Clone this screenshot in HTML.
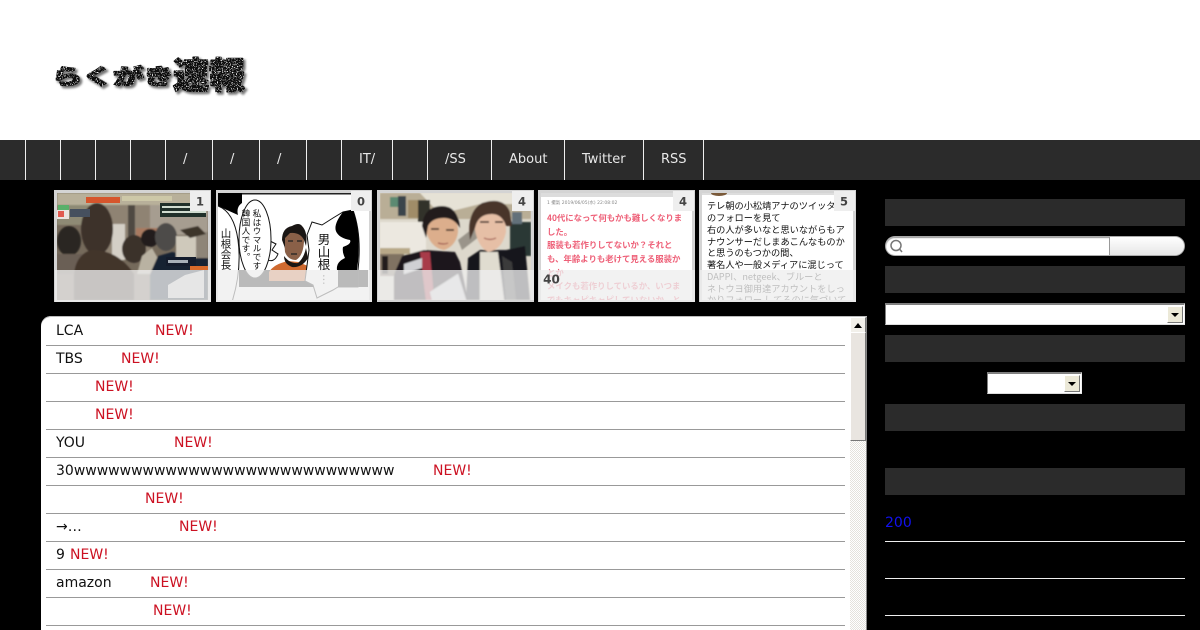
<!DOCTYPE html>
<html lang="ja">
<head>
<meta charset="utf-8">
<title>らくがき速報</title>
<style>
html,body{margin:0;padding:0;background:#000;width:1200px;height:630px;overflow:hidden;}
body{position:relative;font-family:"DejaVu Sans","Noto Sans CJK JP",sans-serif;}
.a{position:absolute;}
#head{left:0;top:0;width:1200px;height:140px;background:#fff;}
#nav{left:0;top:140px;width:1200px;height:40px;background:#2b2b2b;}
#nav i{position:absolute;top:0;width:1px;height:40px;background:#eee;}
#nav span{position:absolute;top:0;line-height:40px;font-size:13px;color:#e8e8e8;}
.bar{position:absolute;left:885px;width:300px;height:27px;background:#2b2b2b;}
#list{left:41px;top:316px;width:826px;height:314px;background:#fff;border-top-left-radius:10px;box-shadow:inset 0 1px 0 #bbb;}
.ln{position:absolute;left:46px;width:799px;height:1px;background:#999;}
.t{position:absolute;font-size:14px;line-height:20px;color:#111;white-space:nowrap;}
.n{position:absolute;font-size:14px;line-height:20px;color:#cc1122;white-space:nowrap;}
.sel{position:absolute;background:#fff;border-top:2px solid #808080;border-left:1px solid #808080;box-sizing:border-box;border-bottom:1px solid #ddd;border-right:1px solid #eee;}
.btn{position:absolute;background:#ece9d8;border-right:1px solid #777;border-bottom:1px solid #777;border-top:1px solid #fff;border-left:1px solid #fff;box-sizing:border-box;}
.tri{position:absolute;width:0;height:0;border-left:4px solid transparent;border-right:4px solid transparent;border-top:4px solid #000;}
.wl{position:absolute;left:885px;width:300px;height:1px;background:#eee;}
</style>
</head>
<body>
<div class="a" id="head"></div>
<svg class="a" style="left:0;top:0" width="300" height="140" viewBox="0 0 300 140">
<defs>
<filter id="grit" x="-10%" y="-30%" width="120%" height="160%">
<feTurbulence type="fractalNoise" baseFrequency="0.8" numOctaves="2" seed="4" result="n"/>
<feColorMatrix in="n" type="matrix" values="0 0 0 0 .85  0 0 0 0 .85  0 0 0 0 .85  0 0 0 -9 3.7" result="w"/>
<feComposite in="w" in2="SourceAlpha" operator="in" result="spots"/>
<feMerge><feMergeNode in="SourceGraphic"/><feMergeNode in="spots"/></feMerge>
<feGaussianBlur stdDeviation=".3"/>
</filter>
<filter id="sh" x="-10%" y="-30%" width="120%" height="160%"><feGaussianBlur stdDeviation="1.1"/></filter>
</defs>
<g font-family="'Noto Sans CJK JP',sans-serif" font-weight="900" stroke-linejoin="round">
<g filter="url(#sh)" fill="#777" stroke="#777" stroke-width="2">
<text transform="translate(54,86) scale(1.27,.88)" font-size="24">らくがき</text>
<text transform="translate(175,90)" font-size="36">速報</text>
</g>
<g filter="url(#grit)" fill="#0a0a0a" stroke="#0a0a0a" stroke-width="1.500">
<text transform="translate(52,84) scale(1.27,.88)" font-size="24">らくがき</text>
<text transform="translate(173,88)" font-size="36">速報</text>
</g>
</g>
</svg>

<div class="a" id="nav">
<i style="left:25px"></i><i style="left:60px"></i><i style="left:95px"></i><i style="left:130px"></i><i style="left:165px"></i><i style="left:212px"></i><i style="left:259px"></i><i style="left:306px"></i><i style="left:341px"></i><i style="left:392px"></i><i style="left:427px"></i><i style="left:491px"></i><i style="left:564px"></i><i style="left:643px"></i><i style="left:703px"></i>
<span style="left:183px">/</span><span style="left:230px">/</span><span style="left:277px">/</span><span style="left:359px">IT/</span><span style="left:445px">/SS</span><span style="left:509px">About</span><span style="left:582px">Twitter</span><span style="left:661px">RSS</span>
</div>

<svg class="a" style="left:0;top:0" width="1200" height="630" viewBox="0 0 1200 630">
<defs>
<filter id="b1"><feGaussianBlur stdDeviation=".9"/></filter>
<filter id="b2"><feGaussianBlur stdDeviation=".7"/></filter>
<clipPath id="c1"><rect x="57" y="193" width="151" height="107"/></clipPath>
<clipPath id="c2"><rect x="218" y="193" width="151" height="107"/></clipPath>
<clipPath id="c3"><rect x="380" y="193" width="151" height="107"/></clipPath>
<clipPath id="c4"><rect x="541" y="193" width="151" height="107"/></clipPath>
<clipPath id="c5"><rect x="702" y="193" width="151" height="107"/></clipPath>
</defs>
<g fill="#d4d4d4">
<rect x="54" y="190" width="157" height="112"/><rect x="216" y="190" width="156" height="112"/><rect x="377" y="190" width="157" height="112"/><rect x="538" y="190" width="157" height="112"/><rect x="699" y="190" width="157" height="112"/>
</g>
<!-- thumb 1 -->
<g clip-path="url(#c1)">
<rect x="57" y="193" width="151" height="107" fill="#756a5b"/>
<g filter="url(#b1)">
<rect x="57" y="193" width="151" height="12" fill="#b8b09a"/>
<rect x="57" y="205" width="50" height="20" fill="#8e8a74"/>
<rect x="105" y="205" width="45" height="50" fill="#8f8373"/>
<rect x="150" y="205" width="58" height="30" fill="#a69d90"/>
<rect x="112" y="224" width="13" height="36" fill="#d4cfc6"/>
<rect x="128" y="205" width="7" height="40" fill="#4f4a42"/>
<rect x="136" y="228" width="22" height="16" fill="#a97a60"/>
<ellipse cx="69" cy="241" rx="12" ry="15" fill="#2b2522"/>
<rect x="57" y="254" width="26" height="20" fill="#6a5f55"/>
<ellipse cx="97" cy="229" rx="16" ry="26" fill="#3c3029"/>
<path d="M74 274 Q76 254 92 250 Q118 250 134 274 L134 300 L74 300Z" fill="#42352c"/>
<ellipse cx="134" cy="249" rx="12" ry="14" fill="#3b322c"/>
<ellipse cx="150" cy="238" rx="9" ry="9" fill="#231e1c"/>
<path d="M137 274 L142 256 L152 248 L160 262 L158 274Z" fill="#b9b2a2"/>
<ellipse cx="166" cy="237" rx="11" ry="14" fill="#4e4b4a"/>
<path d="M150 274 L158 256 L172 252 L208 258 L208 300 L150 300Z" fill="#182030"/>
<rect x="176" y="236" width="20" height="22" fill="#cfc9bb"/>
<rect x="196" y="232" width="12" height="26" fill="#8e8578"/>
<path d="M180 230 L198 226 L206 234 L190 238Z" fill="#3e342c"/>
</g>
<rect x="86" y="197" width="34" height="6" fill="#d6552c"/>
<rect x="122" y="196" width="50" height="5" fill="#cdc8a8"/>
<rect x="58" y="205" width="11" height="5" fill="#59b06a"/>
<rect x="57" y="210" width="12" height="9" fill="#e9e4e0"/>
<rect x="58" y="211" width="6" height="6" fill="#e05a50"/>
<rect x="70" y="209" width="20" height="8" fill="#46505e"/>
<rect x="160" y="203" width="46" height="14" fill="#20302a"/>
<rect x="162" y="206" width="36" height="2" fill="#d0dcd0"/><rect x="162" y="211" width="44" height="2" fill="#d0dcd0"/>
<rect x="166" y="257" width="30" height="9" fill="#141c2c"/><rect x="168" y="260" width="20" height="3" fill="#a8b0b8"/>
<rect x="190" y="266" width="18" height="4" fill="#d86a2a"/>
<path d="M168 298 L168 285 L185 275 L204 270 L204 298Z" fill="#c8c8c8"/>
</g>
<!-- thumb 2 -->
<g clip-path="url(#c2)">
<rect x="218" y="193" width="151" height="107" fill="#fff"/>
<rect x="242" y="193" width="109" height="1.500" fill="#222"/>
<rect x="351" y="193" width="1" height="18" fill="#222"/>
<rect x="239" y="270" width="129" height="17" fill="#000"/>
<path d="M218 193 L242 193 L242 203 Q236 207 238 215 L218 206Z" fill="#000"/>
<path d="M218 206 Q234 212 238 240 Q242 270 232 302 L218 302Z" fill="#fff"/>
<path d="M218 206 Q234 212 238 240 Q242 270 232 302" fill="none" stroke="#111"/>
<path d="M266 259 Q274 264 278 254 L272 250 L276 244 L268 240" fill="#fff" stroke="#111"/>
<ellipse cx="255" cy="239" rx="16" ry="39" fill="#fff" stroke="#111"/>
<path d="M269 272 Q274 264 288 261 L298 262 L308 266 L308 281 L269 281Z" fill="#cf6a30"/>
<path d="M284 238 Q285 228 294 228 Q304 230 304 242 Q303 256 296 260 Q288 260 285 252Z" fill="#8a6048"/>
<path d="M282 240 Q282 228 292 226 Q299 222 302 226 Q308 232 306 246 L304 240 Q300 232 290 233 L285 238 L285 248Z" fill="#1a1614"/>
<path d="M284 256 Q290 264 298 263 Q304 258 306 248 L308 258 Q302 268 292 267 Q284 264 284 256Z" fill="#1a1614"/>
<path d="M288 241 h5 M297 241 h5 M291 254 h6" stroke="#222" stroke-width="1.300"/>
<path d="M312 222 L322 225 L333 218 L343 212 L353 210 Q362 235 358 270 L358 287 L338 287 L333 290 L317 298 L313 285 L305 281 L309 250 L307 235Z" fill="#fff" stroke="#111"/>
<path d="M343 212 L353 210 Q362 235 357 270 L337 270 Q336 262 345 258 Q342 252 343 247 Q352 244 350 240 Q340 238 337 233 Q332 226 343 212Z" fill="#000"/>
<path d="M338 287 L358 287 L358 270 L338 270Z" fill="#000"/>
<g font-family="'Noto Sans CJK JP',sans-serif" fill="#111">
<text x="257" y="209" font-size="8.700" style="writing-mode:vertical-rl">私はウマルです</text>
<text x="246" y="209" font-size="8.700" style="writing-mode:vertical-rl">韓国人です。</text>
<text x="226" y="228" font-size="10.500" style="writing-mode:vertical-rl">山根会長</text>
<text x="324" y="233" font-size="12.500" style="writing-mode:vertical-rl">男山根</text>
<text x="324" y="274" font-size="11" style="writing-mode:vertical-rl">…</text>
</g>
</g>
<!-- thumb 3 -->
<g clip-path="url(#c3)">
<rect x="380" y="193" width="151" height="107" fill="#ddd8cc"/>
<g filter="url(#b2)">
<rect x="380" y="193" width="151" height="26" fill="#b9ae96"/>
<path d="M420 193 L531 193 L531 204 L480 204 L440 214Z" fill="#e6e2d6"/>
<rect x="390" y="197" width="16" height="10" fill="#5c8a72"/>
<rect x="398" y="196" width="8" height="20" fill="#3a444c"/>
<rect x="408" y="200" width="10" height="18" fill="#a08c68"/>
<rect x="418" y="200" width="12" height="24" fill="#32312a"/>
<rect x="380" y="222" width="46" height="32" fill="#ece8e0"/>
<rect x="380" y="248" width="30" height="6" fill="#b8a888"/>
<rect x="380" y="254" width="24" height="22" fill="#807262"/>
<rect x="382" y="256" width="6" height="18" fill="#221c1a"/>
<path d="M458 240 L490 215 L498 222 L462 250Z" fill="#9a948a"/>
<rect x="510" y="222" width="21" height="34" fill="#2a3836"/>
<rect x="512" y="212" width="10" height="12" fill="#63717a"/>
<path d="M394 274 L402 256 L424 250 L455 252 L460 262 L468 300 L394 300Z" fill="#1a181e"/>
<path d="M420 252 L426 300 L434 300 L430 252Z" fill="#a83a48"/>
<path d="M404 264 L422 258 L422 268 L404 274Z" fill="#d0d0d4"/>
<path d="M430 292 L458 274 L466 300 L432 300Z" fill="#d2d2d6"/>
<path d="M466 300 L468 258 L480 250 L506 250 L525 246 L530 300Z" fill="#15141a"/>
<path d="M480 252 L498 252 L504 300 L480 300Z" fill="#e0dcd0"/>
<path d="M502 256 L512 262 L516 300 L506 300Z" fill="#3a3a3a"/>
<path d="M425 228 Q428 210 444 212 Q458 214 458 232 Q456 246 444 250 Q430 248 425 228Z" fill="#dcae8c"/>
<path d="M422 226 Q424 206 442 206 Q458 206 460 228 Q454 218 444 218 Q432 218 428 226 L426 238Z" fill="#201c1e"/>
<path d="M474 222 Q480 208 496 208 Q506 212 506 232 Q502 250 488 252 Q476 246 474 222Z" fill="#e6bfa6"/>
<path d="M470 240 Q466 212 482 203 Q504 196 510 212 L512 226 L506 226 Q502 214 492 214 Q478 214 475 228Z" fill="#4a342c"/>
<path d="M431 229 h8 M446 230 h8 M480 222 h9 M495 222 h8" stroke="#2a1e1a" stroke-width="1.500"/>
<path d="M484 238 q6 3 12 0 M438 243 q6 2 10 0" stroke="#a05a50" fill="none" stroke-width="1.200"/>
</g>
</g>
<!-- thumb 4 -->
<g clip-path="url(#c4)">
<rect x="541" y="193" width="151" height="107" fill="#fff"/>
<rect x="541" y="193" width="151" height="4" fill="#dcdcdc"/>
<text x="547" y="204" font-size="4.500" fill="#888" font-family="'DejaVu Sans',sans-serif">1 撮氣 2019/06/05(水) 22:08:02</text>
<g font-family="'Noto Sans CJK JP',sans-serif" font-size="8.400" font-weight="700" fill="#ee6078">
<text x="547" y="221">40代になって何もかも難しくなりま</text>
<text x="547" y="235">した。</text>
<text x="547" y="248">服装も若作りしてないか？それと</text>
<text x="547" y="262">も、年齢よりも老けて見える服装か</text>
<text x="547" y="276">とか</text>
<text x="547" y="289">メイクも若作りしているか、いつま</text>
<text x="547" y="303">でもキャピキャピしていないか、と</text>
</g>
</g>
<!-- thumb 5 -->
<g clip-path="url(#c5)">
<rect x="702" y="193" width="151" height="107" fill="#fff"/>
<rect x="702" y="193" width="151" height="2" fill="#ddd"/>
<ellipse cx="719" cy="193" rx="8" ry="3" fill="#7a5a3a"/>
<g font-family="'Noto Sans CJK JP',sans-serif" font-size="9.200" fill="#111">
<text x="707" y="209">テレ朝の小松靖アナのツイッタ</text>
<text x="707" y="221">のフォローを見て</text>
<text x="707" y="233">右の人が多いなと思いながらもア</text>
<text x="707" y="245">ナウンサーだしまあこんなものか</text>
<text x="707" y="256">と思うのもつかの間、</text>
<text x="707" y="268">著名人や一般メディアに混じって</text>
<text x="707" y="280">DAPPI、netgeek、ブルーと</text>
<text x="707" y="292">ネトウヨ御用達アカウントをしっ</text>
<text x="707" y="303">かりフォロー してるのに気づいて</text>
</g>
</g>
<g fill="#eeeeee" fill-opacity=".78">
<rect x="55" y="270" width="156" height="32"/><rect x="216" y="270" width="156" height="32"/><rect x="378" y="270" width="156" height="30"/><rect x="539" y="270" width="156" height="32"/><rect x="700" y="270" width="156" height="32"/>
</g>
<g fill="#eeeeee">
<rect x="190" y="191" width="20" height="20"/><rect x="351" y="191" width="20" height="20"/><rect x="512" y="191" width="21" height="20"/><rect x="673" y="191" width="21" height="20"/><rect x="834" y="191" width="21" height="20"/>
</g>
<g font-family="'DejaVu Sans',sans-serif" font-size="11.500" font-weight="700" fill="#444" text-anchor="middle">
<text x="200" y="205.500">1</text><text x="361" y="205.500">0</text><text x="522" y="205.500">4</text><text x="683" y="205.500">4</text><text x="844" y="205.500">5</text>
<text x="551.500" y="283.500" font-size="12">40</text>
</g>
</svg>

<div class="a" id="list"></div>
<div class="ln" style="top:345px"></div><div class="ln" style="top:373px"></div><div class="ln" style="top:401px"></div><div class="ln" style="top:429px"></div><div class="ln" style="top:457px"></div><div class="ln" style="top:485px"></div><div class="ln" style="top:513px"></div><div class="ln" style="top:541px"></div><div class="ln" style="top:569px"></div><div class="ln" style="top:597px"></div><div class="ln" style="top:625px"></div>

<div class="t" style="left:56px;top:321px">LCA</div><div class="n" style="left:155px;top:321px">NEW!</div>
<div class="t" style="left:56px;top:349px">TBS</div><div class="n" style="left:121px;top:349px">NEW!</div>
<div class="n" style="left:95px;top:377px">NEW!</div>
<div class="n" style="left:95px;top:405px">NEW!</div>
<div class="t" style="left:56px;top:433px">YOU</div><div class="n" style="left:174px;top:433px">NEW!</div>
<div class="t" style="left:56px;top:461px">30wwwwwwwwwwwwwwwwwwwwwwwwwwww</div><div class="n" style="left:433px;top:461px">NEW!</div>
<div class="n" style="left:145px;top:489px">NEW!</div>
<div class="t" style="left:56px;top:517px">→…</div><div class="n" style="left:179px;top:517px">NEW!</div>
<div class="t" style="left:56px;top:545px">9</div><div class="n" style="left:70px;top:545px">NEW!</div>
<div class="t" style="left:56px;top:573px">amazon</div><div class="n" style="left:150px;top:573px">NEW!</div>
<div class="n" style="left:153px;top:601px">NEW!</div>

<div class="a" style="left:850px;top:317px;width:16px;height:313px;background:repeating-conic-gradient(#e4e2dc 0 25%,#fff 0 50%) 0 0/2px 2px;"></div>
<div class="btn" style="left:850px;top:317px;width:16px;height:16px;background:#f2f0ea;"><div class="tri" style="left:3px;top:5px;border-top:0;border-bottom:5px solid #000;"></div></div>
<div class="btn" style="left:850px;top:332px;width:16px;height:109px;background:#e9e5e0;"></div>
<div class="a" style="left:866px;top:317px;width:1px;height:313px;background:#888;"></div>

<div class="bar" style="top:199px"></div>
<div class="a" style="left:885px;top:236px;width:300px;height:20px;background:#fff;border-radius:10px;border:1px solid #aaa;box-sizing:border-box;box-shadow:inset 0 1px 1px #999;overflow:hidden;">
<div class="a" style="left:223px;top:0;width:76px;height:18px;background:linear-gradient(#fff,#e6e6e6);border-left:1px solid #999;"></div>
</div>
<svg class="a" style="left:889px;top:238px" width="16" height="16" viewBox="0 0 16 16"><circle cx="7" cy="7.500" r="5" fill="none" stroke="#777" stroke-width="1.500"/><path d="M10.500 11 L13 14" stroke="#777" stroke-width="1.500"/></svg>
<div class="bar" style="top:266px"></div>
<div class="sel" style="left:885px;top:303px;width:300px;height:22px;"></div>
<div class="btn" style="left:1167px;top:306px;width:16px;height:17px;"><div class="tri" style="left:3px;top:6px"></div></div>
<div class="bar" style="top:335px"></div>
<div class="sel" style="left:987px;top:372px;width:95px;height:22px;"></div>
<div class="btn" style="left:1064px;top:375px;width:16px;height:17px;"><div class="tri" style="left:3px;top:6px"></div></div>
<div class="bar" style="top:404px"></div>
<div class="bar" style="top:468px"></div>
<div class="a" style="left:885px;top:513px;font-size:14px;line-height:20px;color:#1111ee;">200</div>
<div class="wl" style="top:541px"></div><div class="wl" style="top:578px"></div><div class="wl" style="top:615px"></div>
</body>
</html>
